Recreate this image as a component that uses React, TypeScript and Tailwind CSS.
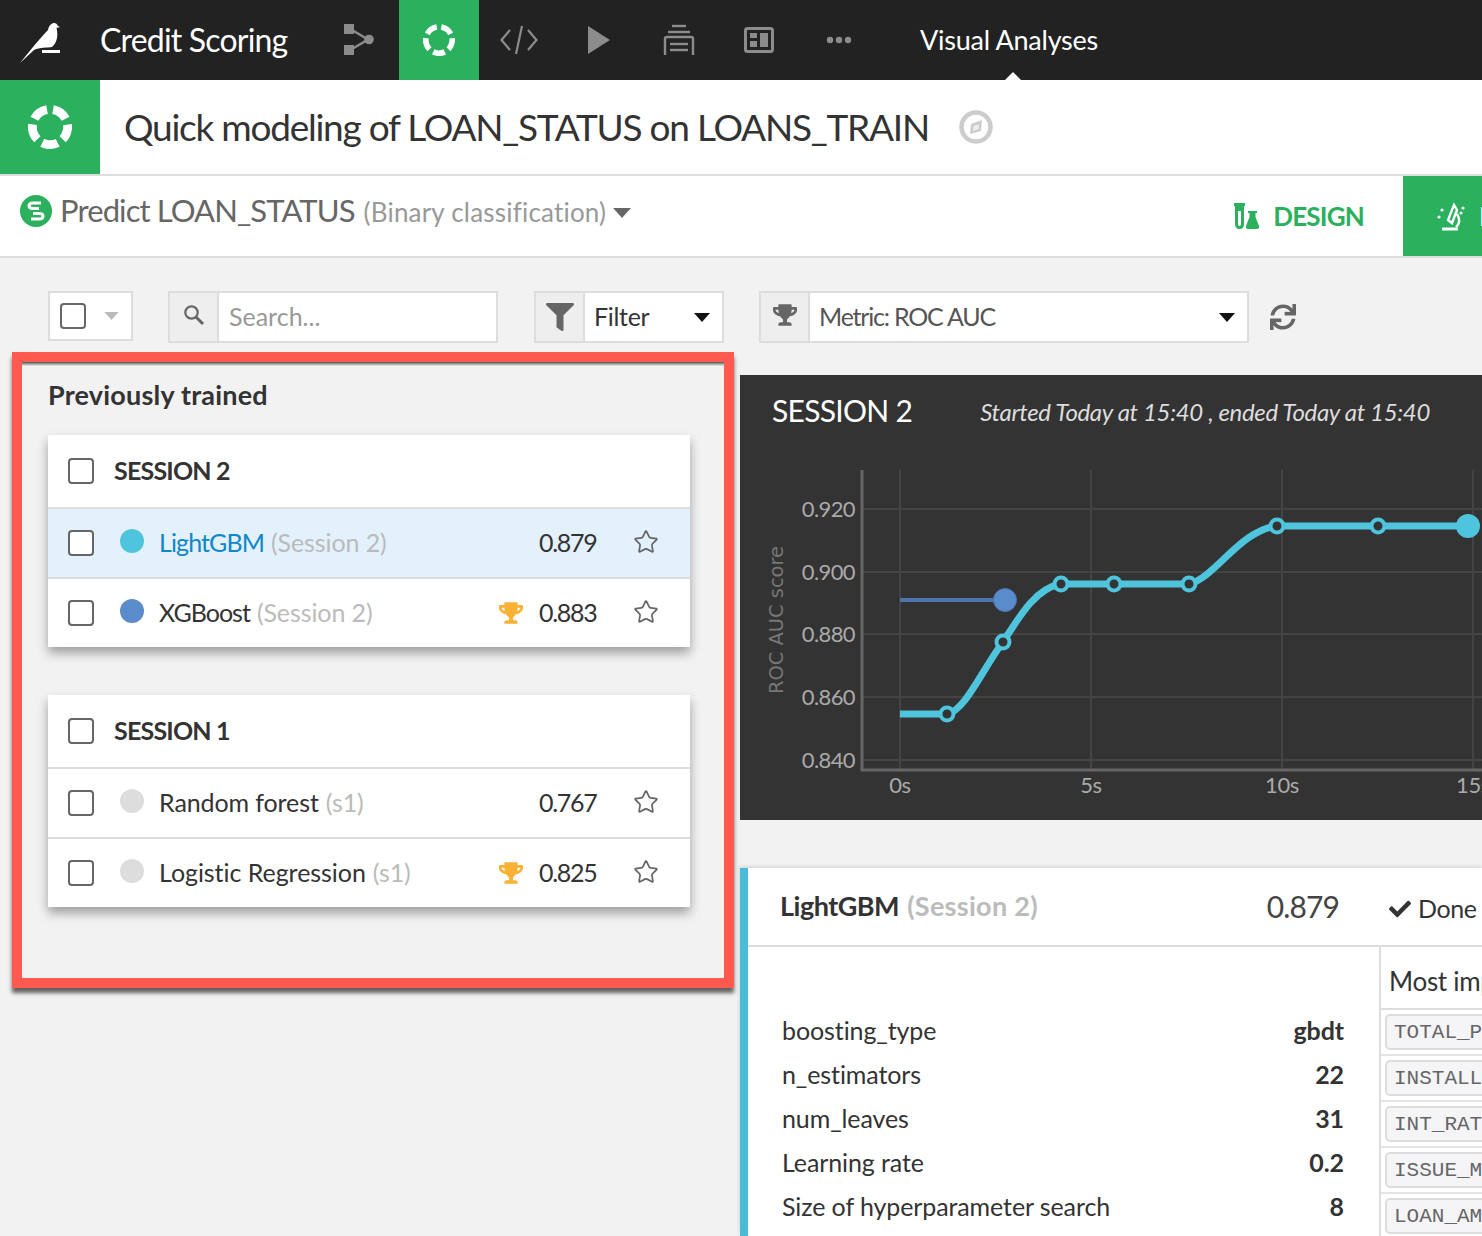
import React from "react";
import { Star } from "lucide-react";
import { FaTrophy, FaFilter, FaSync, FaCheck } from "react-icons/fa";

function Ring({ size, stroke }: { size: number; stroke: number }) {
  return (
    <svg width={size} height={size} viewBox="0 0 40 40">
      <circle cx="20" cy="20" r={20 - stroke / 2} fill="none" stroke="#fff" strokeWidth={stroke} pathLength={100} strokeDasharray="14.5 5.5" transform="rotate(-80 20 20)" />
    </svg>
  );
}

function Caret({ color = "#111", w = 16, h = 9 }: { color?: string; w?: number; h?: number }) {
  return (
    <svg width={w} height={h} viewBox="0 0 16 9" className="shrink-0">
      <polygon points="0,0 16,0 8,9" fill={color} />
    </svg>
  );
}

function Box({ className = "" }: { className?: string }) {
  return <span className={`block w-[26px] h-[26px] shrink-0 rounded-[4px] border-2 border-[#666] bg-white ${className}`} />;
}

function NavIcon({ children, active }: { children: React.ReactNode; active?: boolean }) {
  return <div className={`w-[80px] h-[80px] flex items-center justify-center shrink-0 ${active ? "bg-[#2bb05e]" : ""}`}>{children}</div>;
}

function ModelRow({ dot, name, sub, score, trophy, selected, track }: { dot: string; name: string; sub: string; score: string; trophy?: boolean; selected?: boolean; track: string }) {
  return (
    <div className={`h-[70px] flex items-center pl-[20px] pr-[31px] border-t-2 border-[#ddd] ${selected ? "bg-[#e3f1fd]" : "bg-white"}`}>
      <Box />
      <span className="w-[24px] h-[24px] rounded-full ml-[26px] shrink-0 -mt-1" style={{ backgroundColor: dot }} />
      <span className={`ml-[15px] text-[25px] ${track} ${selected ? "text-[#0f87c9]" : "text-[#333]"}`}>{name}</span>
      <span className="ml-[7px] text-[25px] tracking-[-0.1px] text-[#bbb]">{sub}</span>
      <span className="flex-1" />
      {trophy && <FaTrophy size={24} color="#f9b233" className="shrink-0 -ml-[1px] mr-[1px]" />}
      <span className="ml-[15px] w-[58px] text-[25px] tracking-[-1.3px] text-[#333]">{score}</span>
      <Star size={26} strokeWidth={1.6} color="#666" className="ml-[36px] shrink-0 -mt-[2px]" />
    </div>
  );
}

function SessionCard({ title, children }: { title: string; children: React.ReactNode }) {
  return (
    <div className="w-[642px] bg-white shadow-[0_6px_10px_rgba(0,0,0,0.35)]">
      <div className="h-[72px] flex items-center pl-[20px]">
        <Box />
        <span className="ml-[20px] text-[25px] tracking-[-0.8px] font-bold text-[#333]">{title}</span>
      </div>
      {children}
    </div>
  );
}

function Param({ k, v }: { k: string; v: string }) {
  return (
    <div className="h-[44px] flex items-center justify-between text-[25px] tracking-[-0.1px] text-[#333]">
      <span>{k}</span>
      <span className="font-bold">{v}</span>
    </div>
  );
}

function Chip({ t }: { t: string }) {
  return (
    <div className="h-[46px] border-b-2 border-[#e4e4e4] pl-[4px] pt-[4px] pb-[4px] shrink-0">
      <div className="h-[36px] w-[140px] bg-[#f5f5f7] border-2 border-[#ddd] rounded-[5px] pl-[7px] font-['Liberation_Mono',monospace] text-[21px] leading-[33px] text-[#666]">{t}</div>
    </div>
  );
}

const teal = "#4ec5dc";

function Chart() {
  const hs = [509, 572, 634, 697, 760];
  const labels = ["0.920", "0.900", "0.880", "0.860", "0.840"];
  const vs = [900, 1091, 1282, 1473];
  const xl = ["0s", "5s", "10s", "15s"];
  const pts: [number, number][] = [[947, 714], [1003, 642], [1061, 584], [1114, 584], [1189, 584], [1277, 526], [1378, 526]];
  return (
    <svg width="742" height="375" viewBox="740 445 742 375" className="block">
      {hs.map((y) => <line key={y} x1="862" x2="1482" y1={y} y2={y} stroke="#444" strokeWidth="2" />)}
      {vs.map((x) => <line key={x} x1={x} x2={x} y1="470" y2="770" stroke="#444" strokeWidth="2" />)}
      <path d="M862 470 V770 H1482" fill="none" stroke="#666" strokeWidth="3" />
      {hs.map((y, i) => <text key={y} x="855" y={y + 8} textAnchor="end" fontSize="22" letterSpacing="-0.6" fill="#aaa" fontFamily="Lato, sans-serif">{labels[i]}</text>)}
      {vs.map((x, i) => <text key={x} x={x} y="793" textAnchor="middle" fontSize="22" letterSpacing="-0.3" fill="#aaa" fontFamily="Lato, sans-serif">{xl[i]}</text>)}
      <text transform="translate(783 620) rotate(-90)" textAnchor="middle" fontSize="20" fill="#777" fontFamily="'DejaVu Sans', sans-serif" textLength="148" lengthAdjust="spacingAndGlyphs">ROC AUC score</text>
      <line x1="900" x2="1000" y1="600" y2="600" stroke="#4a74ab" strokeWidth="4" />
      <circle cx="1005" cy="600" r="11.5" fill="#5a8ccc" stroke="#4a74ab" strokeWidth="1" />
      <path d="M900 714 H947 C965 711 982 670 1003 642 C1022 612 1037 588 1061 584 H1189 C1215 578 1240 530 1277 526 H1468" fill="none" stroke={teal} strokeWidth="7" />
      {pts.map(([x, y]) => <circle key={x} cx={x} cy={y} r="6.5" fill="#333" stroke={teal} strokeWidth="4" />)}
      <circle cx="1468" cy="526" r="12" fill={teal} />
    </svg>
  );
}

export default function App() {
  return (
    <div className="w-[1482px] h-[1236px] overflow-hidden bg-[#f2f2f2] font-[Lato,sans-serif] flex flex-col">
      {/* top nav */}
      <div className="relative h-[80px] bg-[#222] flex items-center shrink-0">
        <div className="w-[80px] h-[80px] shrink-0">
          <svg width="80" height="80" viewBox="0 0 80 80">
            <path d="M20 63 L33 47 C38 41 43 35 48 30 C49 25 52 23 54 23 C56 23 57 24 58 26 L60 27 L56.5 28 C58 34 58 42 52 47 C47 48 40 47 34 50 Z" fill="#fff" />
            <rect x="42" y="50" width="18" height="3" fill="#fff" />
          </svg>
        </div>
        <span className="ml-[20px] w-[219px] text-white text-[32px] tracking-[-0.8px] shrink-0">Credit Scoring</span>
        <NavIcon>
          <svg width="32" height="32" viewBox="0 0 32 32">
            <rect x="1" y="0" width="10" height="10" fill="#8c8c8c" />
            <rect x="1" y="21" width="10" height="10" fill="#8c8c8c" />
            <circle cx="26" cy="15.5" r="4.8" fill="#8c8c8c" />
            <path d="M9 6 L25 15.5 L9 25" fill="none" stroke="#8c8c8c" strokeWidth="2.5" />
          </svg>
        </NavIcon>
        <NavIcon active><Ring size={32} stroke={7} /></NavIcon>
        <NavIcon>
          <svg width="38" height="30" viewBox="0 0 38 30" fill="none" stroke="#8c8c8c" strokeWidth="2.2">
            <path d="M10 5 L1.5 15 L10 25" /><path d="M28 5 L36.5 15 L28 25" /><path d="M22 1 L16 29" />
          </svg>
        </NavIcon>
        <NavIcon>
          <svg width="24" height="28" viewBox="0 0 24 28"><polygon points="1,0 23,14 1,28" fill="#8c8c8c" /></svg>
        </NavIcon>
        <NavIcon>
          <svg width="32" height="32" viewBox="0 0 32 32" fill="none" stroke="#8c8c8c" strokeWidth="2.4">
            <path d="M9 2 H23" /><path d="M5 8 H27" /><path d="M2 31 V15 Q2 13 4 13 H28 Q30 13 30 15 V31" /><path d="M7 20 H25" /><path d="M7 26 H25" />
          </svg>
        </NavIcon>
        <NavIcon>
          <svg width="30" height="26" viewBox="0 0 30 26">
            <rect x="1.5" y="1.5" width="27" height="23" rx="2" fill="none" stroke="#8c8c8c" strokeWidth="3" />
            <rect x="6" y="6" width="7" height="5" fill="#8c8c8c" /><rect x="6" y="14" width="7" height="6" fill="#8c8c8c" /><rect x="16" y="6" width="8" height="14" fill="#8c8c8c" />
          </svg>
        </NavIcon>
        <NavIcon>
          <svg width="26" height="8" viewBox="0 0 26 8" fill="#8c8c8c"><circle cx="4" cy="4" r="3.2" /><circle cx="13" cy="4" r="3.2" /><circle cx="22" cy="4" r="3.2" /></svg>
        </NavIcon>
        <span className="ml-[41px] text-white text-[27px] tracking-[-0.25px]">Visual Analyses</span>
        <span className="absolute left-[1005px] bottom-0 w-0 h-0 border-x-[8px] border-x-transparent border-b-[8px] border-b-white" />
      </div>

      {/* title */}
      <div className="h-[96px] bg-white border-b-2 border-[#ddd] flex items-center shrink-0">
        <div className="w-[100px] h-[94px] bg-[#2bb05e] flex items-center justify-center shrink-0"><Ring size={44} stroke={8} /></div>
        <span className="ml-[24px] text-[37px] tracking-[-1.25px] text-[#333]">Quick modeling of LOAN_STATUS on LOANS_TRAIN</span>
        <svg width="34" height="34" viewBox="0 0 34 34" className="ml-[30px] shrink-0">
          <circle cx="17" cy="17" r="14.5" fill="none" stroke="#ccc" strokeWidth="4.5" />
          <polygon points="23,10 22,21 11,24 12,14" fill="#ccc" />
          <polygon points="20,14 19.5,19 14,21 14.5,16" fill="#eee" />
        </svg>
      </div>

      {/* tabs */}
      <div className="h-[82px] bg-white border-b-2 border-[#ddd] flex items-center shrink-0 overflow-hidden">
        <svg width="32" height="32" viewBox="0 0 32 32" className="ml-[20px] -mt-[10px] shrink-0">
          <circle cx="16" cy="16" r="16" fill="#2bb05e" />
          <path d="M21 8 H13 Q9 8 9 11 Q9 13.5 13 13.5 H19" fill="none" stroke="#fff" strokeWidth="3" />
          <path d="M11 24 H19 Q23 24 23 21 Q23 18.5 19 18.5 H13" fill="none" stroke="#fff" strokeWidth="3" />
        </svg>
        <span className="ml-[8px] -mt-[12px] text-[31px] tracking-[-0.9px] text-[#666]">Predict LOAN_STATUS</span>
        <span className="ml-[9px] -mt-[8px] text-[26px] tracking-[0.2px] text-[#999]">(Binary classification)</span>
        <span className="ml-[7px] -mt-[6px]"><Caret color="#666" w={18} h={10} /></span>
        <span className="flex-1" />
        <svg width="26" height="26" viewBox="0 0 26 26" fill="#2bb05e" className="shrink-0">
          <path d="M0 0 H11 V3 H10 V21 Q10 26 5.5 26 Q1 26 1 21 V3 H0 Z M4 8 V20 Q4 23 5.5 23 Q7 23 7 20 V8 Z" fillRule="evenodd" />
          <path d="M14 8 H23 V10 H21.5 V14 L25 23 Q25.5 26 23 26 H14 Q11.5 26 12 23 L15.5 14 V10 H14 Z" />
        </svg>
        <span className="ml-[13px] text-[26px] font-bold tracking-[-0.8px] text-[#2bb05e]">DESIGN</span>
        <div className="ml-[39px] w-[79px] h-[80px] bg-[#2bb05e] flex items-center pl-[33px] text-white text-[27px] font-bold shrink-0 overflow-hidden">
          <svg width="30" height="32" viewBox="0 0 30 32" className="shrink-0" fill="none" stroke="#fff" strokeWidth="2.4">
            <path d="M6 29 H22" strokeWidth="3" />
            <path d="M18 5 L12 20 L16 23 L21 10 Z" />
            <path d="M21 14 Q26 22 20 27" />
            <g fill="#fff" stroke="none"><circle cx="3" cy="17" r="1.6" /><circle cx="6" cy="10" r="1.6" /><circle cx="27" cy="8" r="1.6" /><circle cx="25" cy="13" r="1.6" /></g>
          </svg>
          <span className="ml-[13px]">RESULT</span>
        </div>
      </div>

      {/* content */}
      <div className="flex flex-1 min-h-0">
        <div className="w-[740px] shrink-0 pt-[33px]">
          {/* left toolbar */}
          <div className="h-[52px] flex items-start pl-[48px]">
            <div className="w-[85px] h-[50px] bg-white border-2 border-[#ddd] flex items-center pl-[10px] shrink-0">
              <Box />
              <span className="ml-[18px]"><Caret color="#bbb" w={15} h={8} /></span>
            </div>
            <div className="ml-[35px] w-[330px] h-[52px] flex border-2 border-[#ddd] bg-white shrink-0">
              <div className="w-[49px] bg-[#eee] border-r-2 border-[#ddd] flex items-center justify-center">
                <svg width="22" height="22" viewBox="0 0 22 22" fill="none" stroke="#666" className="-mt-1">
                  <circle cx="8.5" cy="8.5" r="6.2" strokeWidth="2.2" /><path d="M13 13 L20 20" strokeWidth="3" />
                </svg>
              </div>
              <span className="ml-[10px] self-center text-[25px] text-[#999]">Search...</span>
            </div>
            <div className="ml-[36px] w-[190px] h-[52px] flex border-2 border-[#ddd] bg-white shrink-0">
              <div className="w-[49px] bg-[#eee] border-r-2 border-[#ddd] flex items-center justify-center"><FaFilter size={28} color="#666" /></div>
              <span className="ml-[9px] self-center text-[25px] tracking-[-0.3px] text-[#333]">Filter</span>
              <span className="flex-1" />
              <span className="self-center mr-[12px]"><Caret /></span>
            </div>
          </div>

          {/* highlighted panel */}
          <div className="mt-[9px] ml-[12px] w-[722px] h-[636px] border-[10px] border-[#ff5a4d] shadow-[0_5px_4px_rgba(0,0,0,0.6)] pl-[26px]">
            <div className="-ml-[26px] h-[4px] bg-gradient-to-b from-[#555] to-[#f2f2f2]" />
            <div className="h-[66px] flex items-center text-[27px] font-bold tracking-[0.2px] text-[#333] -mt-[4px]">Previously trained</div>
            <div className="mt-[7px] flex flex-col gap-[48px]">
              <SessionCard title="SESSION 2">
                <ModelRow dot="#4ec5dc" name="LightGBM" sub="(Session 2)" score="0.879" selected track="tracking-[-0.9px]" />
                <ModelRow dot="#5a8ccc" name="XGBoost" sub="(Session 2)" score="0.883" trophy track="tracking-[-1px]" />
              </SessionCard>
              <SessionCard title="SESSION 1">
                <ModelRow dot="#ddd" name="Random forest" sub="(s1)" score="0.767" track="tracking-[-0.1px]" />
                <ModelRow dot="#ddd" name="Logistic Regression" sub="(s1)" score="0.825" trophy track="tracking-[-0.05px]" />
              </SessionCard>
            </div>
          </div>
        </div>

        <div className="w-[742px] shrink-0 pt-[33px] flex flex-col">
          {/* metric toolbar */}
          <div className="h-[52px] flex items-center pl-[19px] shrink-0">
            <div className="w-[490px] h-[52px] flex border-2 border-[#ddd] bg-white shrink-0">
              <div className="w-[49px] bg-[#eee] border-r-2 border-[#ddd] flex items-center justify-center"><FaTrophy size={24} color="#666" className="-mt-1" /></div>
              <span className="ml-[9px] self-center text-[25px] tracking-[-1.2px] text-[#555]">Metric: ROC AUC</span>
              <span className="flex-1" />
              <span className="self-center mr-[12px]"><Caret /></span>
            </div>
            <FaSync size={26} color="#666" className="ml-[21px]" />
          </div>

          {/* session panel */}
          <div className="mt-[32px] h-[445px] bg-[#333] shrink-0">
            <div className="h-[70px] flex items-center pl-[32px]">
              <span className="text-[30px] tracking-[-0.7px] text-white">SESSION 2</span>
              <span className="ml-[68px] mt-[3px] text-[24px] italic tracking-[-0.35px] text-[#ddd]">Started Today at 15:40 , ended Today at 15:40</span>
            </div>
            <Chart />
          </div>

          {/* detail */}
          <div className="mt-[48px] flex-1 min-h-0 bg-white border-l-[8px] border-[#4abcd8] shadow-[0_-1px_4px_rgba(0,0,0,0.15)] flex flex-col overflow-hidden">
            <div className="h-[79px] border-b-2 border-[#ddd] flex items-center shrink-0 whitespace-nowrap">
              <span className="ml-[32px] text-[27px] font-bold tracking-[-0.5px] text-[#333]">LightGBM</span>
              <span className="ml-[8px] text-[27px] font-bold tracking-[0.3px] text-[#bbb]">(Session 2)</span>
              <span className="flex-1" />
              <span className="text-[30px] tracking-[-0.9px] text-[#444]">0.879</span>
              <FaCheck size={22} color="#333" className="ml-[50px] mt-1 shrink-0" />
              <span className="ml-[7px] mt-1 w-[64px] overflow-hidden text-[25px] tracking-[-0.4px] text-[#333]">Done in</span>
            </div>
            <div className="flex flex-1 min-h-0">
              <div className="w-[632px] shrink-0 pl-[34px] pr-[36px] pt-[62px]">
                <Param k="boosting_type" v="gbdt" />
                <Param k="n_estimators" v="22" />
                <Param k="num_leaves" v="31" />
                <Param k="Learning rate" v="0.2" />
                <Param k="Size of hyperparameter search" v="8" />
              </div>
              <div className="flex-1 -ml-[1px] border-l-2 border-[#ddd] flex flex-col overflow-hidden whitespace-nowrap">
                <div className="h-[63px] pt-[8px] border-b-2 border-[#ddd] pl-[8px] flex items-center text-[26px] tracking-[-0.3px] text-[#333] shrink-0">Most important</div>
                <Chip t="TOTAL_PYMNT" />
                <Chip t="INSTALLMENT" />
                <Chip t="INT_RATE" />
                <Chip t="ISSUE_MONTH" />
                <Chip t="LOAN_AMNT" />
              </div>
            </div>
          </div>
        </div>
      </div>
    </div>
  );
}
